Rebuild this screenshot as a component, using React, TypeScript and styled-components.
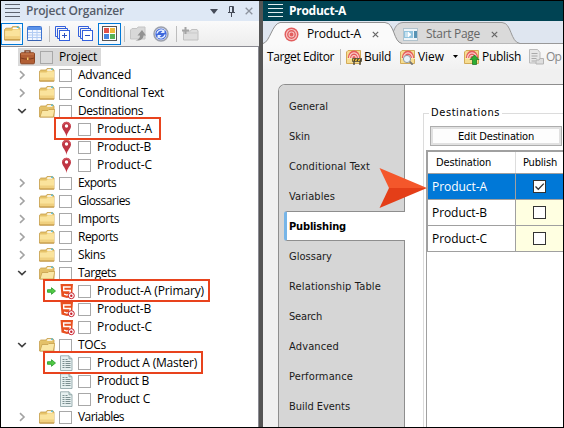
import React, { useLayoutEffect, useRef, useState } from 'react';
import styled, { createGlobalStyle, css } from 'styled-components';

const Global = createGlobalStyle`
  * { box-sizing: border-box; }
  body { margin: 0; background: #fff; }
`;

const ui = '"Open Sans", "Noto Sans", sans-serif';
const tahoma = '"DejaVu Sans Condensed", "DejaVu Sans", sans-serif';

const Window = styled.div`
  width: 564px;
  height: 428px;
  border: 1px solid #000;
  display: flex;
  overflow: hidden;
  font: 12px/18px ${ui};
  color: #000;
`;

/* Text whose tracking adapts so that it fills the given measure. */
const LabelText = styled.span<{ $tone?: string; $weight?: number; $face?: string; $size?: number }>`
  display: inline-block;
  flex: none;
  white-space: nowrap;
  color: ${p => p.$tone ?? '#000'};
  font-weight: ${p => p.$weight ?? 400};
  font-family: ${p => p.$face ?? ui};
  font-size: ${p => p.$size ?? 12}px;
  font-stretch: ${p => (p.$face === tahoma ? 'condensed' : 'normal')};
`;

type LabelProps = { text: string; w: number; tone?: string; weight?: number; face?: string; size?: number };

function Label({ text, w, tone, weight, face, size }: LabelProps) {
  const ref = useRef<HTMLSpanElement>(null);
  const [spacing, setSpacing] = useState(0);
  useLayoutEffect(() => {
    if (ref.current) {
      const natural = ref.current.getBoundingClientRect().width;
      setSpacing((w - natural) / text.length);
    }
  }, [text, w]);
  return (
    <LabelText ref={ref} $tone={tone} $weight={weight} $face={face} $size={size} style={{ letterSpacing: spacing }}>
      {text}
    </LabelText>
  );
}

/* ---------- Left dock ---------- */

const Organizer = styled.aside`
  flex: none;
  width: 258px;
  display: flex;
  flex-direction: column;
  background: #fff;
`;

const Splitter = styled.div`
  flex: none;
  width: 4px;
  background: #555;
`;

const DockTitle = styled.header`
  height: 20px;
  flex: none;
  display: flex;
  align-items: center;
  padding: 0 6px 0 4px;
  background: #dee8f5;
`;

const Grip = styled.div<{ $color: string }>`
  width: 15px;
  height: 14px;
  flex: none;
  margin-right: 6px;
  background: repeating-linear-gradient(${p => p.$color} 0 1px, transparent 1px 4px);
`;

const Spacer = styled.div`
  flex: 1;
`;

const TitleIcons = styled.div`
  display: flex;
  align-items: center;
  gap: 9px;
  svg { display: block; }
`;

const ToolBar = styled.div`
  height: 25px;
  flex: none;
  display: flex;
  align-items: center;
  background: linear-gradient(#fafafa, #ededed);
  border-bottom: 1px solid #8b8b93;
  box-sizing: content-box;
  svg { display: block; flex: none; }
`;

const ToolButton = styled.div<{ $w: number; $gap?: number; $active?: boolean }>`
  flex: none;
  width: ${p => p.$w}px;
  height: 22px;
  margin-left: ${p => p.$gap ?? 0}px;
  display: flex;
  align-items: center;
  justify-content: center;
  ${p => p.$active && css`
    border: 1px solid #0078d7;
    background: #f6f9fd;
  `}
`;

const Divider = styled.div<{ $gap: number }>`
  width: 1px;
  height: 16px;
  flex: none;
  margin-left: ${p => p.$gap}px;
  background: #bdbdbd;
`;

const Tree = styled.div`
  flex: 1;
  padding-top: 1px;
  border-right: 1px solid #8b8b93;
`;

const TreeRow = styled.div<{ $level: number }>`
  position: relative;
  height: 18px;
  display: flex;
  align-items: center;
  padding-left: ${p => [17, 16, 42][p.$level]}px;
`;

const Slot = styled.div<{ $w: number; $inset?: number }>`
  flex: none;
  width: ${p => p.$w}px;
  height: 18px;
  padding-left: ${p => p.$inset ?? 0}px;
  display: flex;
  align-items: center;
  svg { display: block; flex: none; }
`;

const TreeCheck = styled.div<{ $shade?: boolean }>`
  width: 13px;
  height: 13px;
  flex: none;
  margin-right: 6px;
  border: 1px solid #a8a8a8;
  background: ${p => (p.$shade ? '#dadada' : '#fff')};
`;

const RootChip = styled.div`
  display: flex;
  align-items: center;
  width: 83px;
  height: 18px;
  padding-left: 2px;
  background: #d9d9d9;
`;

const Callout = styled.div<{ $left: number; $w: number }>`
  position: absolute;
  z-index: 1;
  left: ${p => p.$left}px;
  top: -3px;
  width: ${p => p.$w}px;
  height: 23px;
  border: 2px solid #e8431d;
`;

function Folder({ open, size = 16 }: { open?: boolean; size?: number }) {
  return (
    <svg width={size} height={size} viewBox="0 0 16 16">
      <path d="M.5 14V4.2L1.8 3H7l1-1.5h5.5L15 3v11z" fill="#e6c36a" stroke="#c79f4c" strokeWidth=".8" />
      <path d="M8.5 2.3h4.8v1.5H8z" fill="#fff" />
      <path d="M12 1.5h2.2v1.3H12z" fill="#4bb7d8" />
      {open ? (
        <>
          <path d="M1.600 4.500h12v5h-12z" fill="#e3c069" />
          <path d="M3 7.500h6l1-1h5.800L14.300 14H1z" fill="#fae7a6" stroke="#c79f4c" strokeWidth=".8" />
        </>
      ) : (
        <>
          <path d="M1 5.500h6.500l1.200-1.200H15v9.400H1z" fill="#fae39c" />
          <path d="M1 10.500h14v3.300H1z" fill="#f0d080" />
          <path d="M.5 14h14.700" stroke="#b98a35" strokeWidth="1" />
        </>
      )}
    </svg>
  );
}

const Chevron = ({ open }: { open?: boolean }) =>
  open ? (
    <svg width="10" height="8" viewBox="0 0 10 8">
      <path d="M1.200 2l3.800 3.600L8.800 2" fill="none" stroke="#404040" strokeWidth="1.700" />
    </svg>
  ) : (
    <svg width="10" height="10" viewBox="0 0 10 10">
      <path d="M3 1.200L7 5 3 8.800" fill="none" stroke="#a3a3a3" strokeWidth="1.600" />
    </svg>
  );

const Pin = () => (
  <svg width="14" height="18" viewBox="0 0 14 18">
    <path d="M6.500 17C6 12 2 9.800 2 6.200a4.500 4.500 0 019 0C11 9.800 7 12 6.500 17z" fill="#bf3543" />
    <path d="M2.600 5.500a4 4 0 017.800 0" fill="none" stroke="#d8616a" />
    <circle cx="6.500" cy="6" r="1.700" fill="#fff" />
  </svg>
);

const Html5 = () => (
  <svg width="16" height="18" viewBox="0 0 16 18">
    <path d="M.5 2h12.500l-1 12.500-5 1.500-5.500-1.500z" fill="#e8501f" />
    <path d="M10.800 5H3.600l.2 3.500h6.500l-.4 3.700-3 .9-2.800-.9" fill="none" stroke="#fff" strokeWidth="1.400" />
    <circle cx="11.300" cy="13.700" r="3" fill="#fff" stroke="#c8202c" strokeWidth="1" />
    <circle cx="11.300" cy="13.700" r="1.200" fill="#c8202c" />
  </svg>
);

const Toc = () => (
  <svg width="14" height="16" viewBox="0 0 14 16">
    <path d="M.500.8h8.500l3 3v11.700H.500z" fill="#e6f0f0" stroke="#9db0b2" />
    <path d="M9 .8v3h3" fill="#c9dada" stroke="#8fa5a5" />
    <path d="M2.500 4.500h2m1 0h2M2.500 6.500h2m1 0h5M2.500 8.500h2m1 0h5M2.500 10.500h2m1 0h5M2.500 12.500h2m1 0h5" stroke="#7b8f90" strokeWidth="1" />
  </svg>
);

const GreenArrow = () => (
  <svg width="9" height="8" viewBox="0 0 9 8">
    <path d="M.5 2.700h4V.7L8.500 4 4.500 7.300v-2h-4z" fill="#51c944" stroke="#239a26" strokeWidth=".8" />
  </svg>
);

const Briefcase = () => (
  <svg width="15" height="16" viewBox="0 0 15 16">
    <path d="M5 4V1.800h5V4" fill="none" stroke="#7a3c20" strokeWidth="1.300" />
    <rect x=".5" y="3.800" width="14" height="11" rx="1.200" fill="#b25f35" stroke="#8b4422" />
    <path d="M1 9c4 1.500 9 1.500 13 0" fill="none" stroke="#7f3c1c" />
    <path d="M1 5h13" stroke="#cf8255" />
    <path d="M7 8.500h1.500v2.500H7z" fill="#f5c667" />
  </svg>
);

const Sheet = () => (
  <svg width="15" height="15" viewBox="0 0 15 15">
    <rect x=".5" y=".5" width="14" height="14" rx="1" fill="#f3f7ff" stroke="#3d74d0" />
    <path d="M1 1h13v3H1z" fill="#5b93ea" />
    <path d="M1 6.500h13M1 9h13M1 11.500h13M5.500 4v10M10 4v10" stroke="#b3ccf3" />
    <path d="M.5 14.500h14" stroke="#3560b0" />
  </svg>
);

const Stack = ({ plus }: { plus?: boolean }) => (
  <svg width="16" height="16" viewBox="0 0 16 16">
    <path d="M.5 10.500V.5h10v2M2.500 12.500v-10h10v2" fill="none" stroke="#3360dc" />
    <path d="M.5 10.500h2M2.500 12.500h2" stroke="#3360dc" />
    <rect x="4.500" y="4.500" width="10" height="10" fill="#fff" stroke="#3360dc" />
    <path d={plus ? 'M7 9.500h5M9.500 7v5' : 'M7 9.500h5'} stroke="#2c50c0" />
  </svg>
);

const Blocks = () => (
  <svg width="15" height="15" viewBox="0 0 15 15">
    <rect x=".5" y=".5" width="14" height="14" fill="#fff" stroke="#555" />
    <rect x="2" y="2" width="5" height="5" fill="#e0524a" />
    <rect x="8" y="2" width="5" height="5" fill="#efb839" />
    <rect x="2" y="8" width="5" height="5" fill="#4585e0" />
    <rect x="8" y="8" width="5" height="5" fill="#58b258" />
  </svg>
);

const MoveUp = () => (
  <svg width="17" height="16" viewBox="0 0 17 16">
    <path d="M.5 13V4L2 2.500h5L8 1h7v12z" fill="#d8d8d8" stroke="#c4c4c4" />
    <path d="M5.500 14.500c3-1 4.500-2.500 4.500-5H7.500l4.500-5.500 4 5.500h-2.500c0 3-2.500 5.500-8 5z" fill="#929292" />
  </svg>
);

const Sync = () => (
  <svg width="16" height="16" viewBox="0 0 16 16">
    <circle cx="8" cy="8" r="7" fill="#dcdff0" stroke="#9ba0ac" strokeWidth="1.500" />
    <circle cx="8" cy="8" r="5.600" fill="#3f68dc" />
    <path d="M4 7.500A4 4 0 0110.500 5M12 8.500A4 4 0 015.500 11" fill="none" stroke="#e8f1ff" strokeWidth="1.500" />
    <path d="M11.500 3v4h-4zM4.500 13V9h4z" fill="#e8f1ff" />
  </svg>
);

const AddFolder = () => (
  <svg width="17" height="16" viewBox="0 0 17 16">
    <path d="M1.500 14V5h7l1-1.500H15L16 5v9z" fill="#dedede" stroke="#c0c0c0" />
    <path d="M2 7h13.500" stroke="#c9c9c9" />
    <path d="M0 4.500h7M3.500 1v7" stroke="#a4a4a4" strokeWidth="2" />
  </svg>
);

type Node = { name: string; w: number; kind: 'folder' | 'pin' | 'target' | 'toc'; open?: boolean; mark?: [number, number]; main?: boolean };

const nodes: Node[] = [
  { name: 'Advanced', w: 53, kind: 'folder' },
  { name: 'Conditional Text', w: 86, kind: 'folder' },
  { name: 'Destinations', w: 65, kind: 'folder', open: true },
  { name: 'Product-A', w: 55, kind: 'pin', mark: [53, 107] },
  { name: 'Product-B', w: 54, kind: 'pin' },
  { name: 'Product-C', w: 55, kind: 'pin' },
  { name: 'Exports', w: 38, kind: 'folder' },
  { name: 'Glossaries', w: 52, kind: 'folder' },
  { name: 'Imports', w: 41, kind: 'folder' },
  { name: 'Reports', w: 40, kind: 'folder' },
  { name: 'Skins', w: 27, kind: 'folder' },
  { name: 'Targets', w: 38, kind: 'folder', open: true },
  { name: 'Product-A (Primary)', w: 107, kind: 'target', mark: [42, 167], main: true },
  { name: 'Product-B', w: 54, kind: 'target' },
  { name: 'Product-C', w: 55, kind: 'target' },
  { name: 'TOCs', w: 28, kind: 'folder', open: true },
  { name: 'Product A (Master)', w: 100, kind: 'toc', mark: [42, 160], main: true },
  { name: 'Product B', w: 52, kind: 'toc' },
  { name: 'Product C', w: 53, kind: 'toc' },
  { name: 'Variables', w: 46, kind: 'folder' },
];

function TreeNode({ node }: { node: Node }) {
  if (node.kind === 'folder') {
    return (
      <TreeRow $level={1}>
        <Slot $w={22}><Chevron open={node.open} /></Slot>
        <Slot $w={20}><Folder open={node.open} /></Slot>
        <TreeCheck />
        <Label text={node.name} w={node.w} />
      </TreeRow>
    );
  }
  return (
    <TreeRow $level={2}>
      <Slot $w={17} $inset={4}>{node.main && <GreenArrow />}</Slot>
      <Slot $w={18}>
        {node.kind === 'pin' && <Pin />}
        {node.kind === 'target' && <Html5 />}
        {node.kind === 'toc' && <Toc />}
      </Slot>
      <TreeCheck />
      <Label text={node.name} w={node.w} />
      {node.mark && <Callout $left={node.mark[0]} $w={node.mark[1]} />}
    </TreeRow>
  );
}

/* ---------- Right editor ---------- */

const Editor = styled.main`
  flex: 1;
  min-width: 0;
  display: flex;
  flex-direction: column;
  background: #f0f0f0;
`;

const EditorTitle = styled.header`
  height: 20px;
  flex: none;
  display: flex;
  align-items: center;
  padding-left: 5px;
  background: #004353;
`;

const TabStrip = styled.div`
  height: 23px;
  flex: none;
  display: flex;
  background: #dfe6f0;
  border-bottom: 1px solid #999;
`;

const Tab = styled.div<{ $active?: boolean }>`
  position: relative;
  z-index: ${p => (p.$active ? 1 : 0)};
  flex: none;
  height: 23px;
  width: ${p => (p.$active ? 139 : 135)}px;
  margin-left: ${p => (p.$active ? 0 : -17)}px;
  padding: 3px 0 0 ${p => (p.$active ? 21 : 18)}px;
  display: flex;
  align-items: center;
  isolation: isolate;
  svg { flex: none; }
`;

const TabShape = styled.svg`
  position: absolute;
  left: 0;
  top: 0;
  z-index: -1;
`;

const TabIcon = styled.div`
  width: 23px;
  height: 18px;
  flex: none;
  display: flex;
  align-items: center;
  svg { display: block; }
`;

const CloseSlot = styled.div`
  margin-left: 11px;
  svg { display: block; }
`;

const CommandBar = styled.div`
  height: 25px;
  flex: none;
  display: flex;
  align-items: center;
  padding-left: 4px;
  overflow: hidden;
  background: linear-gradient(#fafafa, #f1f1f1);
  svg { display: block; flex: none; }
`;

const Command = styled.div<{ $gap: number }>`
  flex: none;
  display: flex;
  align-items: center;
  gap: 2px;
  margin-left: ${p => p.$gap}px;
`;

const Body = styled.div`
  flex: 1;
  min-height: 0;
  margin: 15px 0 0 15px;
  display: flex;
  background: #fff;
  border-top: 1px solid #8e8e8e;
  border-left: 1px solid #8e8e8e;
  border-top-left-radius: 7px;
`;

const Nav = styled.nav`
  width: 126px;
  flex: none;
  padding-top: 6px;
  background: linear-gradient(#8e8e8e, #8e8e8e) right / 1px 100% no-repeat #d6d6d6;
  border-top-left-radius: 6px;
`;

const NavItem = styled.div<{ $active?: boolean }>`
  height: 30px;
  display: flex;
  align-items: center;
  padding: 2px 0 0 10px;
  ${p => p.$active && css`
    margin-left: 5px;
    padding-left: 2px;
    background: #fff;
    border: solid #8e8e8e;
    border-width: 1px 0;
    border-left: 3px solid #76b5e8;
    border-radius: 3px 0 0 3px;
  `}
`;

const Content = styled.section`
  flex: 1;
  min-width: 0;
  padding: 19px 0 0 18px;
  display: flex;
  flex-direction: column;
`;

const Group = styled.div`
  flex: 1;
  display: flex;
  flex-direction: column;
`;

const Legend = styled.div`
  height: 18px;
  flex: none;
  display: flex;
  align-items: center;
  gap: 2px;
  &::before, &::after {
    content: '';
    height: 1px;
    background: #dcdcdc;
  }
  &::before { width: 6px; }
  &::after { flex: 1; }
`;

const GroupBody = styled.div`
  flex: 1;
  margin-top: -9px;
  padding: 13px 0 0 2px;
  border-left: 1px solid #dcdcdc;
  display: flex;
  flex-direction: column;
`;

const EditButton = styled.button`
  width: 132px;
  height: 20px;
  flex: none;
  margin: 0 0 4px 4px;
  padding: 0;
  display: flex;
  align-items: center;
  justify-content: center;
  background: #fdfdfd;
  border: 1px solid #adadad;
  box-shadow: inset 0 0 0 2px #e1e1e1;
`;

const GridArea = styled.div`
  position: relative;
  flex: 1;
  border-top: 2px solid #a0a0a0;
  border-left: 1px solid #a0a0a0;
`;

const GridRow = styled.div<{ $head?: boolean; $selected?: boolean }>`
  height: ${p => (p.$head ? 22 : 26)}px;
  display: grid;
  grid-template-columns: 88px 1fr;
  border-bottom: 1px solid #a0a0a0;
  border-left: 1px solid #a0a0a0;
  background: ${p => (p.$selected ? '#0078d7' : '#fff')};
`;

const Cell = styled.div<{ $pad: number; $fill?: string; $line?: string }>`
  display: flex;
  align-items: center;
  padding-left: ${p => p.$pad}px;
  background: ${p => p.$fill ?? 'transparent'};
  border-right: 1px solid ${p => p.$line ?? 'transparent'};
`;

const GridCheck = styled.div`
  width: 13px;
  height: 13px;
  background: #fff;
  border: 1px solid #333;
  svg { display: block; }
`;

const Pointer = styled.svg`
  position: absolute;
  left: -48px;
  top: 15px;
`;

const TargetDisc = () => (
  <svg width="15" height="15" viewBox="0 0 15 15">
    <circle cx="7.500" cy="7.500" r="7" fill="#e25d5d" />
    <circle cx="7.500" cy="7.500" r="5" fill="none" stroke="#f6c4c4" strokeWidth="1.200" />
    <circle cx="7.500" cy="7.500" r="2.500" fill="none" stroke="#f6c4c4" strokeWidth="1.100" />
  </svg>
);

const StartIcon = () => (
  <svg width="15" height="13" viewBox="0 0 15 13">
    <rect x=".5" y=".5" width="14" height="12" fill="#eef4f8" stroke="#b1c2cc" />
    <path d="M1 3h9v7H1z" fill="#91c4df" />
    <path d="M3 4v5M5 4l3 2.500L5 9z" stroke="#fff" fill="#fff" />
    <path d="M11 3h3v7h-3z" fill="#5793b4" />
  </svg>
);

const Close = () => (
  <svg width="7" height="7" viewBox="0 0 7 7">
    <path d="M.8.8l5.400 5.400M6.200.8L.8 6.200" stroke="#666" strokeWidth="1.200" />
  </svg>
);

function BullseyeFolder({ kind }: { kind: 'build' | 'view' | 'publish' }) {
  return (
    <svg width="16" height="16" viewBox="0 0 16 16">
      <path d="M.5 14.500V3L2 1.500h12.500v13z" fill="#f6dd92" stroke="#d3ab58" />
      <path d="M1.800 9a6.200 7.500 0 0112.400 0z" fill="#e65c5c" />
      <path d="M3.500 9a4.500 5.200 0 019 0M5.800 9a2.200 2.500 0 014.400 0" fill="none" stroke="#fad2d0" strokeWidth="1.200" />
      <path d="M1 9.500h14" stroke="#fae8ae" />
      {kind === 'build' && (
        <>
          <path d="M6.500 9.500h9v3h-9z" fill="#f7c42f" stroke="#333" strokeWidth=".7" />
          <path d="M8 12l1.500-2.500M11 12l1.500-2.500M14 12l1.500-2.500M8 12.500V16M14 12.500V16" stroke="#333" strokeWidth="1.200" />
        </>
      )}
      {kind === 'view' && (
        <>
          <circle cx="7" cy="10" r="3.600" fill="#e5f1fa" stroke="#919ba3" />
          <path d="M9.700 12.700l3 3" stroke="#777" strokeWidth="1.800" />
        </>
      )}
      {kind === 'publish' && <path d="M10.500 6l4.500 4.500h-2.500v5h-4v-5H6z" fill="#2cae32" stroke="#176d20" strokeWidth=".7" />}
    </svg>
  );
}

const OpenIcon = () => (
  <svg width="16" height="16" viewBox="0 0 16 16">
    <path d="M1.500.5h8l2.500 3V14H1.500z" fill="#e7e7e7" stroke="#bbb" />
    <path d="M3.500 4.500h6M3.500 7h6M3.500 9.500h5M3.500 12h4" stroke="#aaa" />
    <path d="M8 15v-4h3l1-1.500h3.500V15z" fill="#dedede" stroke="#b4b4b4" />
  </svg>
);

const navItems: [string, number][] = [
  ['General', 39], ['Skin', 21], ['Conditional Text', 81], ['Variables', 46], ['Publishing', 57], ['Glossary', 43],
  ['Relationship Table', 92], ['Search', 33], ['Advanced', 50], ['Performance', 64], ['Build Events', 61],
];

const products = ['Product-A', 'Product-B', 'Product-C'];

export default function App() {
  return (
    <>
      <Global />
      <Window>
        <Organizer>
          <DockTitle>
            <Grip $color="#5e6470" />
            <Label text="Project Organizer" w={98} weight={600} tone="#555c69" />
            <Spacer />
            <TitleIcons>
              <svg width="8" height="5" viewBox="0 0 8 5"><path d="M0 0h8L4 5z" fill="#454b58" /></svg>
              <svg width="9" height="12" viewBox="0 0 9 12">
                <path d="M2.500 7V1.500h4V7M1 7.500h7M4.500 8v4M5.500 2v5" fill="none" stroke="#454b58" />
              </svg>
              <svg width="8" height="8" viewBox="0 0 8 8"><path d="M.7.7l6.600 6.600M7.300.7L.7 7.300" stroke="#8c929d" strokeWidth="1.300" /></svg>
            </TitleIcons>
          </DockTitle>
          <ToolBar>
            <ToolButton $w={22} $active><Folder size={17} /></ToolButton>
            <ToolButton $w={15} $gap={4}><Sheet /></ToolButton>
            <Divider $gap={7} />
            <ToolButton $w={16} $gap={5}><Stack plus /></ToolButton>
            <ToolButton $w={16} $gap={7}><Stack /></ToolButton>
            <ToolButton $w={23} $gap={4} $active><Blocks /></ToolButton>
            <Divider $gap={3} />
            <ToolButton $w={17} $gap={5}><MoveUp /></ToolButton>
            <ToolButton $w={16} $gap={6}><Sync /></ToolButton>
            <Divider $gap={7} />
            <ToolButton $w={17} $gap={5}><AddFolder /></ToolButton>
          </ToolBar>
          <Tree>
            <TreeRow $level={0}>
              <RootChip>
                <Slot $w={20}><Briefcase /></Slot>
                <TreeCheck $shade />
                <Label text="Project" w={38} />
              </RootChip>
            </TreeRow>
            {nodes.map((n, i) => <TreeNode key={i} node={n} />)}
          </Tree>
        </Organizer>
        <Splitter />
        <Editor>
          <EditorTitle>
            <Grip $color="#e3edf0" />
            <Label text="Product-A" w={57} weight={700} tone="#fff" />
          </EditorTitle>
          <TabStrip>
            <Tab $active>
              <TabShape width="139" height="23" viewBox="0 0 139 23">
                <path d="M0 22.500C7 21 9 3 17 1.500H122C132 2 130 21 139 22.500V23H0z" fill="#fafafa" />
                <path d="M0 22.500C7 21 9 3 17 1.500H122C132 2 130 21 139 22.500" fill="none" stroke="#909090" />
              </TabShape>
              <TabIcon><TargetDisc /></TabIcon>
              <Label text="Product-A" w={54} />
              <CloseSlot><Close /></CloseSlot>
            </Tab>
            <Tab>
              <TabShape width="135" height="23" viewBox="0 0 135 23">
                <path d="M8 22C8 12 10 2 18 1.500H117C127 2 125 21 135 22.500H8z" fill="#dadada" />
                <path d="M8 12C10 6 12 2 18 1.500H117C127 2 125 21 135 22.500" fill="none" stroke="#999" />
              </TabShape>
              <TabIcon><StartIcon /></TabIcon>
              <Label text="Start Page" w={54} tone="#666" />
              <CloseSlot><Close /></CloseSlot>
            </Tab>
          </TabStrip>
          <CommandBar>
            <Label text="Target Editor" w={67} />
            <Divider $gap={6} />
            <Command $gap={5}><BullseyeFolder kind="build" /><Label text="Build" w={27} /></Command>
            <Command $gap={9}><BullseyeFolder kind="view" /><Label text="View" w={26} /></Command>
            <Command $gap={9}><svg width="5" height="3" viewBox="0 0 5 3"><path d="M0 0h5L2.500 3z" /></svg></Command>
            <Command $gap={6}><BullseyeFolder kind="publish" /><Label text="Publish" w={39} /></Command>
            <Command $gap={7}><OpenIcon /><Label text="Op" w={15} tone="#888" /></Command>
          </CommandBar>
          <Body>
            <Nav>
              {navItems.map(([name, w]) => {
                const active = name === 'Publishing';
                return (
                  <NavItem key={name} $active={active}>
                    <Label text={name} w={w} face={tahoma} size={11} weight={active ? 700 : 400} tone={active ? '#000' : '#1a1a1a'} />
                  </NavItem>
                );
              })}
            </Nav>
            <Content>
              <Group>
                <Legend><Label text="Destinations" w={69} face={tahoma} size={11} /></Legend>
                <GroupBody>
                  <EditButton><Label text="Edit Destination" w={76} face={tahoma} size={11} /></EditButton>
                  <GridArea>
                    <GridRow $head>
                      <Cell $pad={8} $line="#ddd"><Label text="Destination" w={55} face={tahoma} size={11} /></Cell>
                      <Cell $pad={7}><Label text="Publish" w={34} face={tahoma} size={11} /></Cell>
                    </GridRow>
                    {products.map((name, i) => (
                      <GridRow key={name} $selected={i === 0}>
                        <Cell $pad={4} $line="#a0a0a0"><Label text={name} w={55} tone={i === 0 ? '#fff' : '#000'} /></Cell>
                        <Cell $pad={17} $fill={i === 0 ? undefined : '#ffffe1'}>
                          <GridCheck>
                            {i === 0 && (
                              <svg width="11" height="11" viewBox="0 0 11 11">
                                <path d="M1.500 5.500l2.800 2.800L9.800 2.600" fill="none" stroke="#333" strokeWidth="1.300" />
                              </svg>
                            )}
                          </GridCheck>
                        </Cell>
                      </GridRow>
                    ))}
                    <Pointer width="48" height="42" viewBox="0 0 48 42">
                      <path d="M.5 1L48 21H10z" fill="#f4572b" />
                      <path d="M.5 41L48 21H10z" fill="#e43e18" />
                    </Pointer>
                  </GridArea>
                </GroupBody>
              </Group>
            </Content>
          </Body>
        </Editor>
      </Window>
    </>
  );
}
